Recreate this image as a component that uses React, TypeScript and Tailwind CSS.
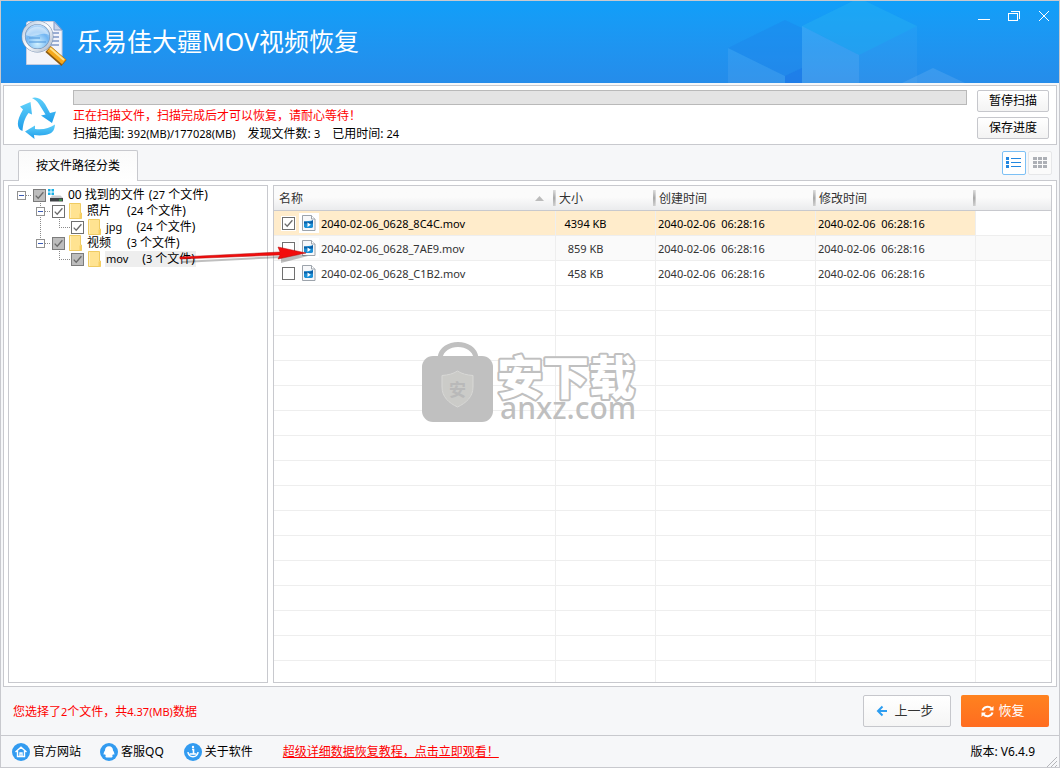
import { useState } from "react";

type TreeNode = {
  id: string;
  level: number;
  name: string;
  count: string;
  icon: "disk" | "folder";
  lines: string[];
  partial?: boolean;
  selected?: boolean;
  latin?: boolean;
};

const nodes: TreeNode[] = [
  { id: "root", level: 0, name: "00 找到的文件", count: "27", icon: "disk", lines: ["open"], partial: true },
  { id: "photo", level: 1, name: "照片", count: "24", icon: "folder", lines: ["none", "openMid"] },
  { id: "jpg", level: 2, name: "jpg", count: "24", icon: "folder", lines: ["none", "line", "end"], latin: true },
  { id: "video", level: 1, name: "视频", count: "3", icon: "folder", lines: ["none", "openEnd"], partial: true },
  { id: "mov", level: 2, name: "mov", count: "3", icon: "folder", lines: ["none", "none", "end"], partial: true, selected: true, latin: true },
];

const files = [
  { name: "2040-02-06_0628_8C4C.mov", size: "4394 KB", created: "2040-02-06  06:28:16", modified: "2040-02-06  06:28:16" },
  { name: "2040-02-06_0628_7AE9.mov", size: "859 KB", created: "2040-02-06  06:28:16", modified: "2040-02-06  06:28:16" },
  { name: "2040-02-06_0628_C1B2.mov", size: "458 KB", created: "2040-02-06  06:28:16", modified: "2040-02-06  06:28:16" },
];

const emptyRows = Array.from({ length: 16 }, (_, i) => i);

function CheckBox({ id, checked, partial, onChange, label }: {
  id: string;
  checked: boolean;
  partial?: boolean;
  onChange: () => void;
  label?: string;
}) {
  return (
    <span className="relative block size-[13px] shrink-0">
      <input
        id={id}
        type="checkbox"
        aria-label={label}
        checked={checked}
        onChange={onChange}
        className={`block size-[13px] appearance-none border ring-1 ring-white ${partial ? "border-[#7c7c7c] bg-[#bdbdbd]" : "border-[#707070] bg-white"}`}
      />
      {checked && (
        <svg className="pointer-events-none absolute inset-0" width="13" height="13" viewBox="0 0 13 13" fill="none" stroke="#6b6b6b" strokeWidth="1.3">
          <path d="M2.7 6.6 5.2 9.2 10.4 3.2" />
        </svg>
      )}
    </span>
  );
}

function TreeLine({ kind }: { kind: string }) {
  const open = kind.startsWith("open");
  return (
    <svg width="19" height="16" viewBox="0 0 19 16" className="shrink-0 overflow-visible" fill="none" stroke="#8a8a8a" shapeRendering="crispEdges">
      {kind === "openMid" && <path d="M9.5 0V16" strokeDasharray="1 1" />}
      {kind === "openEnd" && <path d="M9.5 0V8" strokeDasharray="1 1" />}
      {kind === "line" && <path d="M9.5 0V16" strokeDasharray="1 1" />}
      {kind === "end" && <path d="M9.5 0V8.5H21" strokeDasharray="1 1" />}
      {open && (
        <>
          <path d="M14 8.5H21" strokeDasharray="1 1" />
          <rect x="5.5" y="4.5" width="8" height="8" fill="#fff" stroke="#919191" />
          <path d="M7 8.5H12" stroke="#3b5bb5" />
        </>
      )}
    </svg>
  );
}

function FolderIcon() {
  return (
    <svg width="13" height="16" viewBox="0 0 13 16" className="shrink-0">
      <path d="M.5.5H11.5V10H12.5V15.5H.5Z" fill="#ffe391" stroke="#efcb62" />
      <path d="M10.5 10.5H12.5V15.5H10.5Z" fill="#f7cf60" />
      <path d="M1.5 1V15" stroke="#fff0bd" />
    </svg>
  );
}

function DiskIcon() {
  return (
    <svg width="16" height="16" viewBox="0 0 16 16" className="shrink-0">
      <path d="M0 2h2.500v2.500H0zM3.500 2h2.500v2.500H3.500zM0 5.500h2.500v2.500H0zM3.500 5.500h2.500v2.500H3.500z" fill="#19b0e6" />
      <path d="M4 8.500h8.500l2.500 2.500H2z" fill="#c9cbce" />
      <path d="M2 11h13v3.500H2z" fill="#3f4246" />
      <path d="M11 12.500h3v1h-3z" fill="#35d04d" />
    </svg>
  );
}

function MovieIcon() {
  return (
    <svg width="14" height="16" viewBox="0 0 14 16">
      <path d="M.5.5H9.5L13 4V15.5H.5Z" fill="#f7f8fa" stroke="#9ca3ab" />
      <path d="M9.5.5V4H13" fill="#fff" stroke="#9ca3ab" />
      <path d="M2 6.500 11 5.500V12.200L9.500 13H3.200L2 12Z" fill="#1b8fd6" />
      <path d="M2 8.500V6.500L8 7 11 5V8.500Z" fill="#0b5fa6" />
      <path d="M5.500 7.600 8.800 9.800 5.500 12Z" fill="#fff" />
    </svg>
  );
}

function Logo() {
  return (
    <svg width="46" height="48" viewBox="0 0 46 48" className="mt-1 shrink-0">
      <defs>
        <radialGradient id="lens" cx="50%" cy="75%" r="75%">
          <stop offset="0" stopColor="#d3f2ff" />
          <stop offset=".55" stopColor="#71b5f2" />
          <stop offset="1" stopColor="#d4e8fb" />
        </radialGradient>
        <linearGradient id="rim" x1="0" y1="0" x2="1" y2="1">
          <stop offset="0" stopColor="#b4c8e0" />
          <stop offset=".5" stopColor="#fff" />
          <stop offset="1" stopColor="#a6b4c8" />
        </linearGradient>
      </defs>
      <path d="M7 1.500H33L41 10V44.500H5.500V3Z" fill="#f3f4fa" stroke="#c3cbe0" />
      <path d="M33 1.500V10H41Z" fill="#c9d3ea" stroke="#8198c6" />
      <path d="M31 13H38M31 17H38M31 21H38M30 25H38" stroke="#7f97c6" strokeWidth="1.5" />
      <path d="M27 29 43 43" stroke="#8c5a10" strokeWidth="8" />
      <path d="M28 29 43 42" stroke="#f5a81b" strokeWidth="6" />
      <path d="M29 28 43 40" stroke="#ffe08a" strokeWidth="2" />
      <circle cx="16.500" cy="16.500" r="14" fill="url(#lens)" stroke="#7892b4" strokeWidth="4" />
      <circle cx="16.500" cy="16.500" r="14" fill="none" stroke="url(#rim)" strokeWidth="2.8" />
      <path d="M5 15C8 4 25 4 28 15 21 11 13 19 5 15Z" fill="#fff" opacity=".45" />
      <path d="M8 18H19M8 22H25" stroke="#5a9fe0" strokeWidth="2" opacity=".6" />
    </svg>
  );
}

function RecycleIcon() {
  return (
    <svg width="40" height="44" viewBox="0 0 40 44" className="shrink-0">
      <defs>
        <linearGradient id="rc" x1="0" y1="0" x2="0" y2="1">
          <stop offset="0" stopColor="#5fd0fa" />
          <stop offset="1" stopColor="#1e9cea" />
        </linearGradient>
      </defs>
      <g fill="url(#rc)">
        <path d="M16 2C20 .5 25 2 29 8L34 17 40 15.500 36 27 25 19.500 29.500 18.500 23 8C21 5 19 3.500 16 2Z" />
        <path d="M4 10.500 14.500 6 16 18.500 12.500 17C8 23 7 29 6.500 35 .5 33 0 25 7 13.500Z" />
        <path d="M9 35.500 19 29.500V33C28 34 33 32 39 28.500 38.500 35 36 38 29 39 25 39.500 22 39.500 18 39L18.500 43Z" />
      </g>
    </svg>
  );
}

function TitleBar() {
  return (
    <header className="relative flex h-[82px] shrink-0 items-center overflow-hidden bg-linear-to-b from-[#109ff9] to-[#258cea] pl-5">
      <svg className="absolute right-0 top-0" width="359" height="82" viewBox="700 1 359 82">
        <path d="M728 48 785 20 802 28V68L785 76Z" fill="#1d7fe8" opacity=".3" />
        <path d="M728 48 785 76V83H728Z" fill="#fff" opacity=".07" />
        <path d="M785 76 802 68V83H785Z" fill="#1a6fe6" opacity=".5" />
        <path d="M802 26 859-2 917 26 859 55Z" fill="#2bb6f2" opacity=".35" />
        <path d="M802 26 859 55V83H802Z" fill="#fff" opacity=".11" />
        <path d="M859 55 917 26V83H859Z" fill="#fff" opacity=".04" />
        <path d="M902 83 933 68 965 83Z" fill="#fff" opacity=".1" />
      </svg>
      <Logo />
      <h1 className="ml-2.5 text-[25px] font-normal text-white">乐易佳大疆MOV视频恢复</h1>
      <div className="absolute right-2 top-2 flex gap-4 text-white">
        <button type="button" aria-label="最小化">
          <svg width="14" height="14" viewBox="0 0 14 14" stroke="currentColor" shapeRendering="crispEdges"><path d="M1 10.500H13" /></svg>
        </button>
        <button type="button" aria-label="还原">
          <svg width="14" height="14" viewBox="0 0 14 14" fill="none" stroke="currentColor" shapeRendering="crispEdges"><path d="M1.500 4.500H10.500V11.500H1.500ZM4 2.500H12.500V10" /></svg>
        </button>
        <button type="button" aria-label="关闭">
          <svg width="14" height="14" viewBox="0 0 14 14" stroke="currentColor"><path d="M2 2 12 12M12 2 2 12" /></svg>
        </button>
      </div>
    </header>
  );
}

function ScanPanel() {
  const btn = "h-[22px] w-[72px] rounded-xs border border-[#c6c7cc] bg-linear-to-b from-white to-[#f3f3f3] text-xs leading-5";
  return (
    <section className="mt-0.5 flex shrink-0 border border-[#c8c9ce] bg-white pb-px pl-3 pr-[7px] pt-1">
      <div className="pt-1.5"><RecycleIcon /></div>
      <div className="ml-[17px] min-w-0 flex-1">
        <progress
          aria-label="扫描进度"
          value={0}
          max={100}
          className="block h-[15px] w-full appearance-none border border-[#b9b9b9] bg-[#e4e4e4] [&::-webkit-progress-bar]:bg-[#e4e4e4]"
        />
        <p className="mt-0.5 text-xs leading-[18px] text-[#ff0000]">正在扫描文件，扫描完成后才可以恢复，请耐心等待！</p>
        <p className="flex gap-3 text-xs leading-[18px]">
          <span>扫描范围: <span className="text-[11px]">392(MB)/177028(MB)</span></span>
          <span>发现文件数: <span className="text-[11px]">3</span></span>
          <span>已用时间: <span className="text-[11px]">24</span></span>
        </p>
      </div>
      <div className="ml-2.5 flex flex-col gap-[5px]">
        <button type="button" className={btn}>暂停扫描</button>
        <button type="button" className={btn}>保存进度</button>
      </div>
    </section>
  );
}

function FileTree() {
  const [checked, setChecked] = useState<Record<string, boolean>>({ root: true, photo: true, jpg: true, video: true, mov: true });
  return (
    <div className="w-[260px] shrink-0 border border-[#c8c9ce] bg-white pl-[3px] pt-px text-xs">
      {nodes.map((n) => (
        <div key={n.id} className="flex h-4 items-center">
          {n.lines.map((kind, i) => <TreeLine key={i} kind={kind} />)}
          <span className="ml-0.5">
            <CheckBox
              id={n.id}
              checked={checked[n.id]}
              partial={n.partial}
              onChange={() => setChecked({ ...checked, [n.id]: !checked[n.id] })}
            />
          </span>
          <span className={`flex w-[17px] ${n.icon === "disk" ? "ml-0.5" : "ml-1"}`}>{n.icon === "disk" ? <DiskIcon /> : <FolderIcon />}</span>
          <label
            htmlFor={n.id}
            className={`flex whitespace-nowrap px-px leading-4 ${n.level === 0 ? "ml-0.5 gap-1" : n.latin ? "gap-3.5" : "gap-4"} ${n.selected ? "bg-[#eeeeee]" : ""}`}
          >
            <span className={n.latin ? "text-[11px]" : ""}>{n.name}</span>
            <span>(<span className="text-[11px]">{n.count}</span> 个文件)</span>
          </label>
        </div>
      ))}
    </div>
  );
}

function HeadCell({ text, sorted }: { text: string; sorted?: boolean }) {
  return (
    <th className={`relative h-[25px] border-b border-[#c8c9ce] pb-0 pr-0 pt-0.5 text-left font-normal ${sorted ? "pl-[5px]" : "pl-[3px]"}`}>
      {text}
      {sorted && (
        <svg className="absolute right-3 top-2.5" width="9" height="5" viewBox="0 0 9 5"><path d="M4.500 0 9 5H0Z" fill="#bcbcbc" /></svg>
      )}
      <span className="absolute right-0 top-1 flex h-4">
        <i className="w-0.5 bg-linear-to-b from-[#dcdcdc] via-[#a9a9a9] to-[#d0d0d0]" />
        <i className="w-px bg-linear-to-b from-[#e4e4e4] via-[#c9c9c9] to-[#dcdcdc]" />
      </span>
    </th>
  );
}

function FileTable() {
  const [picked, setPicked] = useState([true, false, false]);
  const cell = "h-[25px] border-b border-r border-[#eeeeee] pb-0";
  return (
    <div className="min-w-0 flex-1 overflow-hidden border border-[#c8c9ce] bg-white">
      <table className="w-full table-fixed border-separate border-spacing-0">
        <colgroup>
          <col className="w-[282px]" />
          <col className="w-[100px]" />
          <col className="w-[160px]" />
          <col className="w-[160px]" />
          <col />
        </colgroup>
        <thead>
          <tr className="bg-linear-to-b from-[#fbfbfb] from-45% to-[#e9eaec] text-xs text-[#333]">
            <HeadCell text="名称" sorted />
            <HeadCell text="大小" />
            <HeadCell text="创建时间" />
            <HeadCell text="修改时间" />
            <th className="border-b border-[#c8c9ce] p-0" />
          </tr>
        </thead>
        <tbody>
          {files.map((f, i) => {
            const tone = i === 0 ? "bg-[#ffeccb] text-black" : i === 1 ? "bg-[#fafafa] text-[#333]" : "text-[#333]";
            return (
              <tr key={f.name} className="text-[11px] whitespace-pre">
                <td className={`${cell} ${tone} pl-2 pt-0`}>
                  <div className="flex items-center">
                    <CheckBox
                      id={`file${i}`}
                      checked={picked[i]}
                      label={f.name}
                      onChange={() => setPicked(picked.map((p, k) => (k === i ? !p : p)))}
                    />
                    <span className="ml-1 mr-0.5 flex h-5 w-5 items-center justify-center bg-white"><MovieIcon /></span>
                    <span className="pt-0.5">{f.name}</span>
                  </div>
                </td>
                <td className={`${cell} ${tone} pr-10 pt-0.5 text-center`}>{f.size}</td>
                <td className={`${cell} ${tone} pl-0.5 pt-0.5`}>{f.created}</td>
                <td className={`${cell} ${tone} pl-0.5 pt-0.5`}>{f.modified}</td>
                <td className={`h-[25px] border-b border-[#eeeeee] p-0 ${i === 1 ? "bg-[#fafafa]" : ""}`} />
              </tr>
            );
          })}
          {emptyRows.map((r) => (
            <tr key={r}>
              <td className={cell} />
              <td className={cell} />
              <td className={cell} />
              <td className={cell} />
              <td className="h-[25px] border-b border-[#eeeeee] p-0" />
            </tr>
          ))}
        </tbody>
      </table>
    </div>
  );
}

function Watermark() {
  return (
    <svg
      className="pointer-events-none absolute left-1/2 top-1/2 -translate-x-1/2 -translate-y-1/2"
      width="218"
      height="98"
      viewBox="421 335 218 98"
    >
      <path d="M440 358C442 340 474 340 476 358" fill="none" stroke="#c0c0c0" strokeWidth="5" />
      <rect x="422" y="356" width="71" height="66" rx="11" fill="#c0c0c0" />
      <path d="M457.500 371C462 374 467 375 473 375.500V387C473 397 466 403 457.500 407 449 403 442 397 442 387V375.500C448 375 453 374 457.500 371Z" fill="#cbcbc8" stroke="#d8d8d6" />
      <text x="457.500" y="396" textAnchor="middle" fontSize="17" fontWeight="700" fill="#b9b9b9">安</text>
      <text x="497" y="394" fontSize="46" fontWeight="900" fill="#fff" stroke="#c0c0c0" strokeWidth="4" strokeLinejoin="round" paintOrder="stroke">安下载</text>
      <text x="500" y="419" fontSize="30" fontWeight="500" fill="#bfbfbf">anxz.com</text>
    </svg>
  );
}

export default function App() {
  return (
    <div className="relative flex h-screen flex-col overflow-hidden border border-[#c8c9ce] bg-[#f6f7f9] font-['Noto_Sans','Noto_Sans_CJK_SC',sans-serif] text-black">
      <TitleBar />
      <main className="flex min-h-0 flex-1 flex-col px-0.5">
        <ScanPanel />
        <div className="flex h-[35px] shrink-0 items-end justify-between pl-[15px] pr-[5px]">
          <button type="button" className="relative z-10 -mb-px h-[31px] w-[120px] rounded-t-xs border border-b-0 border-[#c8c9ce] bg-linear-to-b from-[#fafafa] to-white text-xs">
            按文件路径分类
          </button>
          <div className="mb-[5px] flex gap-0.5">
            <button type="button" aria-label="列表视图" className="flex size-6 items-center justify-center rounded-xs border border-[#7cc0f5] bg-white">
              <svg width="16" height="12" viewBox="0 0 16 12" fill="#2287e0" shapeRendering="crispEdges">
                <path d="M0 0h3v3H0zM0 4h3v3H0zM0 8h3v3H0zM5 1h10v1H5zM5 5h10v1H5zM5 9h10v1H5z" />
              </svg>
            </button>
            <button type="button" aria-label="图标视图" className="flex size-6 items-center justify-center rounded-xs border border-[#e6e7e9] bg-[#fbfbfb]">
              <svg width="14" height="12" viewBox="0 0 14 12" fill="#adb0b6" shapeRendering="crispEdges">
                <path d="M0 0h4v3H0zM5 0h4v3H5zM10 0h4v3h-4zM0 4h4v3H0zM5 4h4v3H5zM10 4h4v3h-4zM0 8h4v3H0zM5 8h4v3H5zM10 8h4v3h-4z" />
              </svg>
            </button>
          </div>
        </div>
        <section className="relative flex min-h-0 flex-1 gap-[5px] border border-[#c8c9ce] bg-white px-1 pb-[3px] pt-1">
          <FileTree />
          <FileTable />
          <svg className="pointer-events-none absolute left-40 top-14" width="150" height="32" viewBox="164 237 150 32">
            <path d="M182 261 280 256V251L308 256 281 263V258L182 263Z" fill="#000" opacity=".25" />
            <path d="M180 257 280 252 278 247 306 253 278 259 280 255 180 259Z" fill="#f20d0d" stroke="#b30c0c" strokeWidth=".5" />
          </svg>
        </section>
      </main>
      <div className="flex h-12 shrink-0 items-center pl-3 pr-2.5 text-xs">
        <p className="flex-1 pt-0.5 text-[#ff0000]">
          您选择了<span className="text-[11px]">2</span>个文件，共<span className="text-[11px]">4.37(MB)</span>数据
        </p>
        <button type="button" className="flex h-8 w-[88px] items-center justify-center gap-1.5 rounded-xs border border-[#c6c7cc] bg-linear-to-b from-white to-[#f5f5f5] pr-1 text-[13px] text-[#333]">
          <svg width="12" height="12" viewBox="0 0 12 12" fill="none" stroke="#2d9df0" strokeWidth="2"><path d="M6.500 1.500 2 6 6.500 10.500M2 6H11" /></svg>
          上一步
        </button>
        <button type="button" className="ml-2.5 flex h-8 w-[88px] items-center justify-center gap-1 rounded-xs bg-linear-to-b from-[#ff821f] to-[#ff6c20] pr-1 text-[13px] text-white">
          <svg width="13" height="13" viewBox="0 0 13 13" fill="none" stroke="#fff" strokeWidth="2">
            <path d="M1.500 5.500C2.500 2 7.500.5 10.500 3.500M11.500 7.500C10.500 11 5.500 12.500 2.500 9.500" />
            <path d="M12.500 1V5.500H8ZM.5 12V7.500H5Z" fill="#fff" stroke="none" />
          </svg>
          恢复
        </button>
      </div>
      <footer className="relative flex h-8 shrink-0 items-center border-t border-[#c8c9ce] pl-[11px] pr-6 text-xs">
        <a href="#site" className="flex items-center gap-[3px]">
          <svg width="18" height="18" viewBox="0 0 18 18"><circle cx="9" cy="9" r="9" fill="#329bf0" /><path d="M3.500 9 9 4.200 14.500 9M5.500 8V13.500H12.500V8M8 13.500V10H10V13.500" fill="none" stroke="#fff" strokeWidth="1.400" /></svg>
          官方网站
        </a>
        <a href="#qq" className="ml-[19px] flex items-center gap-[3px]">
          <svg width="18" height="18" viewBox="0 0 18 18"><circle cx="9" cy="9" r="9" fill="#329bf0" /><path d="M9 3.200C11.600 3.200 13 5 13 7.500 14 8.800 14.700 10.500 14.300 11.800L13 11.300 12.200 12.800C13 13.500 12.500 14.500 11.500 14.500H6.500C5.500 14.500 5 13.500 5.800 12.800L5 11.300 3.700 11.800C3.300 10.500 4 8.800 5 7.500 5 5 6.400 3.200 9 3.200Z" fill="#fff" /></svg>
          客服QQ
        </a>
        <a href="#about" className="ml-5 flex items-center gap-[3px]">
          <svg width="18" height="18" viewBox="0 0 18 18"><circle cx="9" cy="9" r="9" fill="#329bf0" /><path d="M8 6.500H9.500V10.500H10.500" fill="none" stroke="#fff" strokeWidth="1.600" /><circle cx="9" cy="4" r="1.200" fill="#fff" /><path d="M4 9C4 15.200 14 15.200 14 9M5.500 11H12.500" fill="none" stroke="#fff" strokeWidth="1.500" /></svg>
          关于软件
        </a>
        <a href="#guide" className="ml-[30px] text-[#ff0000] underline">超级详细数据恢复教程，点击立即观看！</a>
        <span className="ml-auto">版本: V6.4.9</span>
        <svg className="absolute bottom-0 right-0.5" width="10" height="10" viewBox="0 0 10 10" stroke="#b5b6ba"><path d="M0 10 10 0M4 10 10 4M8 10 10 8" /></svg>
      </footer>
      <Watermark />
    </div>
  );
}
